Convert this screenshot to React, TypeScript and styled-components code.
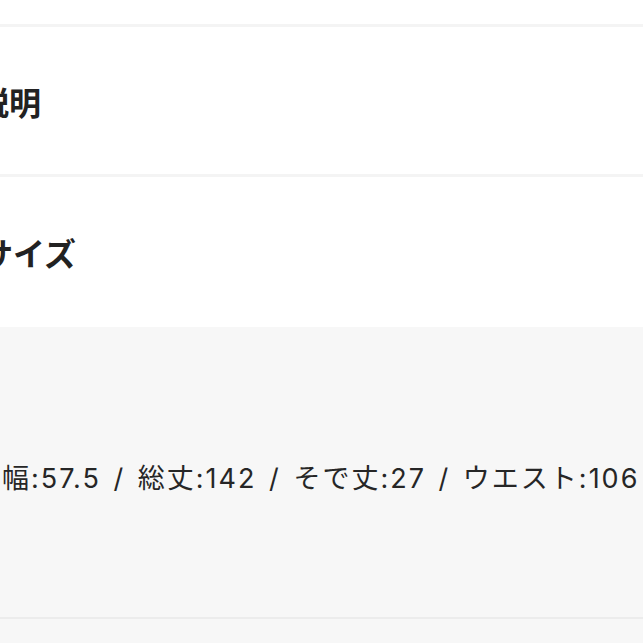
import styled, { createGlobalStyle } from 'styled-components';

const GlobalStyle = createGlobalStyle`
  html, body {
    margin: 0;
    padding: 0;
    background: #ffffff;
  }
  body {
    font-family: "Noto Sans CJK JP", "Noto Sans", sans-serif;
    color: #222222;
    overflow: hidden;
  }
`;

const Page = styled.div`
  width: 643px;
  height: 643px;
  display: flex;
  flex-direction: column;
  overflow: hidden;
`;

const TopSpace = styled.div`
  height: 24px;
  background: #ffffff;
`;

const Band = styled.div`
  height: 3px;
  background: #f4f4f4;
  flex-shrink: 0;
`;

const HeadingBlock = styled.section<{ $height: number }>`
  height: ${p => p.$height}px;
  display: flex;
  align-items: center;
  background: #ffffff;
  flex-shrink: 0;
`;

const Heading = styled.h2<{ $shift: number }>`
  margin: 0 0 0 ${p => p.$shift}px;
  font-size: 32px;
  font-weight: 700;
  line-height: 1;
  color: #222222;
  white-space: nowrap;
`;

const SpecBlock = styled.div`
  height: 290px;
  display: flex;
  align-items: center;
  background: #f7f7f7;
  flex-shrink: 0;
`;

const SpecText = styled.p`
  margin: 12px 0 0 -27px;
  font-family: "Inter", "Noto Sans CJK JP", sans-serif;
  font-size: 27px;
  font-weight: 400;
  line-height: 1;
  letter-spacing: 2px;
  word-spacing: 3px;
  color: #262626;
  white-space: nowrap;
`;

const Divider = styled.div`
  height: 2px;
  background: #ececec;
  flex-shrink: 0;
`;

const Rest = styled.div`
  flex: 1;
  background: #f7f7f7;
`;

export default function App() {
  return (
    <>
      <GlobalStyle />
      <Page>
        <TopSpace />
        <Band />
        <HeadingBlock $height={147}>
          <Heading $shift={-23}>説明</Heading>
        </HeadingBlock>
        <Band />
        <HeadingBlock $height={150}>
          <Heading $shift={-19}>サイズ</Heading>
        </HeadingBlock>
        <SpecBlock>
          <SpecText>身幅:57.5 / 総丈:142 / そで丈:27 / ウエスト:106</SpecText>
        </SpecBlock>
        <Divider />
        <Rest />
      </Page>
    </>
  );
}
